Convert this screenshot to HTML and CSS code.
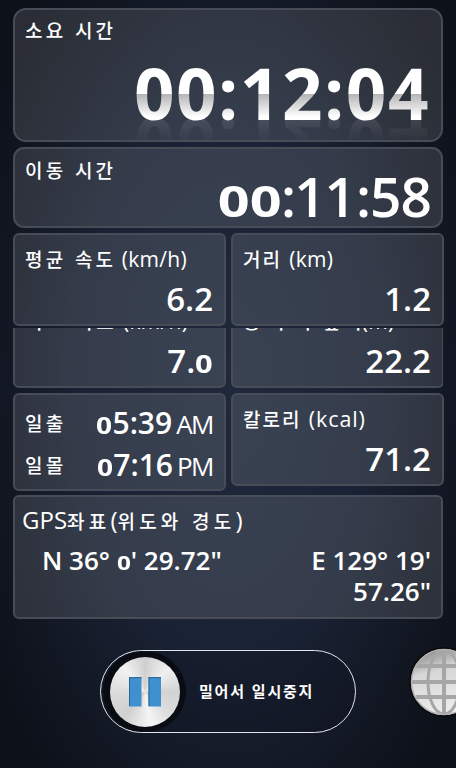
FILE: index.html
```html
<!DOCTYPE html>
<html lang="ko">
<head>
  <meta charset="UTF-8" />
  <meta name="viewport" content="width=device-width, initial-scale=1.0"/>
  <title>운동 기록</title>
  <link rel="stylesheet" href="styles.css">
</head>
<body>

  <main class="tracker">
    <section class="card total">
      <h2 class="label">소요 시간</h2>
      <div class="clock">00:12:04</div>
    </section>

    <section class="card moving">
      <h2 class="label">이동 시간</h2>
      <div class="value"><span class="zero">0</span><span class="zero">0</span>:<span class="one">1</span><span class="one">1</span>:58</div>
    </section>

    <div class="row">
      <section class="card stat">
        <h2 class="label">평균 속도 <span class="unit">(km/h)</span></h2>
        <div class="value">6.2</div>
      </section>
      <section class="card stat">
        <h2 class="label close">거리 <span class="unit">(km)</span></h2>
        <div class="value">1.2</div>
      </section>
    </div>

    
    <div class="row cut">
      <section class="card stat">
        <h2 class="label">최고 속도 <span class="unit">(km/h)</span></h2>
        <div class="value">7.<span class="zero">0</span></div>
      </section>
      <section class="card stat">
        <h2 class="label">총 누적 높이<span class="unit">(m)</span></h2>
        <div class="value">22.2</div>
      </section>
    </div>

    <div class="row last">
      <section class="card sun">
        <div class="sun-line"><span class="label">일출</span><span class="value"><span class="zero">0</span>5:39<small>AM</small></span></div>
        <div class="sun-line"><span class="label">일몰</span><span class="value"><span class="zero">0</span>7:16<small>PM</small></span></div>
      </section>
      <section class="card stat kcal">
        <h2 class="label close">칼로리 <span class="unit">(kcal)</span></h2>
        <div class="value">71.2</div>
      </section>
    </div>

    <section class="card gps">
      <h2 class="label"><span class="unit">GPS</span>좌표<span class="unit">(</span>위도와 경도<span class="unit">)</span></h2>
      <div class="coords">
        <div class="lat">N 36° <span class="zero">0</span>' 29.72"</div>
        <div class="lon">E 129° 19'<br>57.26"</div>
      </div>
    </section>

    <div class="slider">
      <div class="knob">
        <div class="disc">
          <svg width="34" height="30" viewBox="0 0 34 30">
            <path d="M1 0H13.500V29.500H1zM20.500 0H33V29.500H20.500z" fill="#408fce"/>
            <path d="M1 .7H13.500M20.500 .7H33M1.500 0V29M21 0V29" stroke="#2b6692" fill="none"/>
          </svg>
        </div>
      </div>
      <span class="slider-text">밀어서 일시중지</span>
    </div>
  </main>

  <div class="globe">
    <svg width="72" height="76" viewBox="0 0 72 76">
      <defs>
        <linearGradient id="ball" x1="0" y1="0" x2=".3" y2="1">
          <stop offset="0" stop-color="#777"/>
          <stop offset=".4" stop-color="#d6d6d6"/>
          <stop offset="1" stop-color="#ececec"/>
        </linearGradient>
        <clipPath id="ballClip"><circle cx="36" cy="38" r="32"/></clipPath>
      </defs>
      <circle cx="36" cy="38" r="35" fill="#0a0b0d"/>
      <circle cx="36" cy="38" r="33" fill="url(#ball)"/>
      <g clip-path="url(#ballClip)" fill="none" stroke="#a5a6a7" stroke-width="4">
        <path d="M36 4V70M2 38H70M8 22H64M8 53H64"/>
        <ellipse cx="36" cy="38" rx="16" ry="32" stroke-width="3"/>
      </g>
      <circle cx="36" cy="38" r="32.500" fill="none" stroke="#b0b0b0" stroke-width="1.500"/>
    </svg>
  </div>

</body>
</html>
```

FILE: styles.css
```css
* {
  box-sizing: border-box;
}
body {
  margin: 0;
  height: 768px;
  position: relative;
  overflow: hidden;
  font-family: 'Open Sans', 'Noto Sans CJK KR', sans-serif;
  color: #fff;
  background: radial-gradient(ellipse 275px 520px at 50% 50%, #1f293b 0%, #1a2335 50%, #10151f 88%, #0d111a 100%);
}
.tracker {
  padding: 8px 13px 0;
}
.card {
  background: rgba(255,255,255,0.12);
  border: 2px solid #474c56;
  border-radius: 6px;
  overflow: hidden;
}
.label {
  margin: 0;
  font-family: 'Noto Sans CJK KR', sans-serif;
  font-size: 19px;
  font-weight: 500;
  line-height: 24px;
  letter-spacing: 3.2px;
  white-space: pre;
}
.label.close {
  letter-spacing: 2px;
}
.unit {
  font-family: 'Open Sans', sans-serif;
  font-size: 21px;
  font-weight: 400;
  letter-spacing: 0.3px;
  margin-left: -3px;
}
.close .unit {
  margin-left: 0;
}
.value {
  font-weight: 600;
  font-size: 33px;
  line-height: 40px;
  text-align: right;
  white-space: nowrap;
}
.zero {
  display: inline-block;
  font-size: 0.78em;
  font-weight: 700;
  line-height: 1;
  padding: 0 0.06em;
  transform: scaleX(1.2);
}

.total {
  height: 134px;
  border-radius: 13px;
  padding: 8px 11px 0 10px;
}
.clock {
  margin-top: 13px;
  font-weight: 700;
  font-size: 71px;
  line-height: 76px;
  letter-spacing: 1.5px;
  text-align: right;
  color: transparent;
  background: linear-gradient(#fff 0 39px, #b4b4b4 39px, #fff 62px);
  -webkit-background-clip: text;
  background-clip: text;
  -webkit-box-reflect: below -24px linear-gradient(transparent 50%, rgba(255,255,255,0.14));
}
.moving {
  height: 81px;
  margin-top: 5px;
  border-radius: 11px;
  padding: 9px 10px 0;
}
.moving .value {
  margin-top: -21px;
  font-size: 55px;
  line-height: 70px;
  letter-spacing: -1px;
}
.moving .zero {
  padding: 0 0.1em;
  transform: scaleX(1.3);
}
.moving .one {
  margin: 0 1px 0 -1px;
}

.row {
  display: grid;
  grid-template-columns: 213px 213px;
  column-gap: 5px;
  align-items: start;
  margin-top: 5px;
}
.stat {
  height: 93px;
  padding: 12px 11px 0 10px;
}
.stat .value {
  margin-top: 8px;
}
.cut {
  height: 60px;
  margin-top: 2px;
  overflow: hidden;
}
.cut .card {
  margin-top: -33px;
}
.cut .label {
  letter-spacing: 3.4px;
}
.last {
  height: 98px;
}
.kcal .unit {
  font-size: 21.5px;
  letter-spacing: 0.9px;
}
.sun {
  height: 98px;
  padding: 7px 10px 0;
}
.sun-line {
  display: flex;
  justify-content: space-between;
  align-items: center;
  height: 42px;
}
.sun .value {
  font-size: 30px;
}
.sun small {
  font-size: 26px;
  font-weight: 500;
  letter-spacing: -1.5px;
  margin: 0 1px 0 4px;
}
.gps {
  height: 124px;
  margin-top: 4px;
  padding: 11px 10px 0 7px;
}
.gps .label {
  letter-spacing: 4.2px;
}
.gps .unit {
  font-size: 24px;
  letter-spacing: 0;
  margin-left: 0;
}
.coords {
  display: flex;
  justify-content: space-between;
  margin-top: 12px;
  padding-left: 20px;
  font-size: 26px;
  font-weight: 600;
  line-height: 31px;
}
.lon {
  text-align: right;
}

.slider {
  display: flex;
  align-items: flex-start;
  width: 256px;
  height: 83px;
  margin: 31px 0 0 87px;
  border: 1.5px solid #e4e4ea;
  border-radius: 42px;
  background: rgba(16,20,33,0.35);
}
.knob {
  display: flex;
  align-items: center;
  justify-content: center;
  width: 83px;
  height: 81px;
  margin-left: 2px;
  border-radius: 50%;
  background: #090c13;
}
.disc {
  display: flex;
  align-items: center;
  justify-content: center;
  width: 70px;
  height: 70px;
  border-radius: 50%;
  background: conic-gradient(#cfcfcf, #f0f0f0 45deg, #d2d2d2 90deg, #dedede 135deg, #f5f5f5 170deg, #d0d0d0 220deg, #dcdcdc 270deg, #f2f2f2 320deg, #cfcfcf);
}
.slider-text {
  margin-left: 13px;
  font-family: 'Noto Sans CJK KR', sans-serif;
  font-size: 15px;
  font-weight: 700;
  line-height: 79px;
  letter-spacing: 1.8px;
}
/* sits half off the right edge */
.globe {
  position: absolute;
  right: 0;
  top: 644px;
  width: 48px;
  height: 76px;
  overflow: hidden;
}
```
